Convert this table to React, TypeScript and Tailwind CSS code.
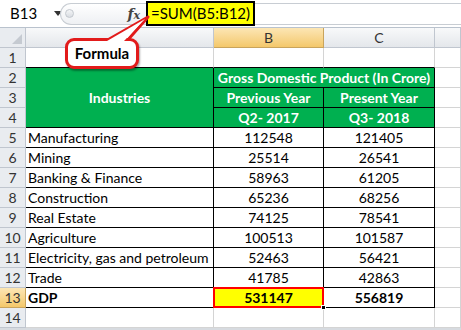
import React from 'react';

const rows: [string, string, string][] = [
  ['Manufacturing', '112548', '121405'],
  ['Mining', '25514', '26541'],
  ['Banking & Finance', '58963', '61205'],
  ['Construction', '65236', '68256'],
  ['Real Estate', '74125', '78541'],
  ['Agriculture', '100513', '101587'],
  ['Electricity, gas and petroleum', '52463', '56421'],
  ['Trade', '41785', '42863'],
];

const rowHead = 'flex items-center justify-center border-r border-b border-[#c0c6cf] bg-[#e9ecf0] text-[#333] text-[14px]';
const colHead = 'flex items-center justify-center border-r border-b border-[#c0c6cf] bg-gradient-to-b from-[#f8f9fa] to-[#e4e7eb] text-[#333] text-[14px]';
const selHead = 'flex items-center justify-center border-r border-b border-[#c9a45c] bg-gradient-to-b from-[#fce6b4] to-[#f4c86a] text-[14px] text-[#333]';
const grid = 'border-r border-b border-[#d4d4d4] bg-white';
const green = 'flex items-center justify-center whitespace-nowrap bg-[#00b050] text-white font-bold text-[14px] border-r border-b border-black';
const cell = 'flex items-center border-r border-b border-black bg-white text-[14px] text-black';

export default function App() {
  return (
    <div className="relative w-[461px] h-[330px] overflow-hidden bg-white font-['Lato',sans-serif] leading-none">
      {/* formula bar */}
      <div className="flex items-center h-[28px] border-b border-[#b9c2cd] bg-white">
        <div className="flex items-center w-[60px] h-full pl-[10px] text-[15px] text-black">
          <span>B13</span>
          <span className="ml-[17px] w-0 h-0 border-l-[4px] border-r-[4px] border-t-[5px] border-l-transparent border-r-transparent border-t-[#333]" />
        </div>
        <div className="flex items-center w-[86px] h-[22px] rounded-l-full border border-r-0 border-[#c8cdd3] bg-gradient-to-b from-white to-[#eef0f3]">
          <span className="ml-[4px] w-[9px] h-[9px] rounded-full border border-[#c3c8ce] bg-gradient-to-b from-[#f4f5f7] to-[#d9dde2]" />
          <span className="ml-auto mr-[6px] font-['DejaVu_Serif',serif] italic font-bold text-[14px] text-[#444]">
            f<span className="text-[11px]">x</span>
          </span>
        </div>
        <div className="flex items-center h-[25px] px-[3px] border-2 border-black bg-[#ffff00] text-[15px] text-black">
          =SUM(B5:B12)
        </div>
        <div className="flex-1 h-[22px] border-t border-b border-[#c8cdd3]" />
      </div>

      {/* sheet grid */}
      <div className="grid grid-cols-[26px_188px_110px_111px_1fr] auto-rows-[20px]">
        {/* column headers */}
        <div className="relative border-r border-b border-[#c0c6cf] bg-[#e9ecf0]">
          <svg className="absolute right-[3px] bottom-[3px]" width="10" height="10">
            <polygon points="10,0 10,10 0,10" fill="#c5cad1" />
          </svg>
        </div>
        <div className={colHead}>A</div>
        <div className={selHead}>B</div>
        <div className={colHead}>C</div>
        <div className={colHead} />

        {/* row 1 */}
        <div className={rowHead}>1</div>
        <div className="border-r border-b border-r-[#d4d4d4] border-b-black bg-white" />
        <div className="border-r border-b border-r-[#d4d4d4] border-b-black bg-white" />
        <div className="border-r border-b border-r-[#d4d4d4] border-b-black bg-white" />
        <div className={grid} />

        {/* rows 2-4 header */}
        <div className={`${rowHead} col-start-1 row-start-3`}>2</div>
        <div className={`${rowHead} col-start-1 row-start-4`}>3</div>
        <div className={`${rowHead} col-start-1 row-start-5`}>4</div>
        <div className={`${green} col-start-2 row-start-3 row-span-3`}>Industries</div>
        <div className={`${green} col-start-3 col-span-2 row-start-3`}>Gross Domestic Product (In Crore)</div>
        <div className={`${green} col-start-3 row-start-4`}>Previous Year</div>
        <div className={`${green} col-start-4 row-start-4`}>Present Year</div>
        <div className={`${green} col-start-3 row-start-5`}>Q2- 2017</div>
        <div className={`${green} col-start-4 row-start-5`}>Q3- 2018</div>
        <div className={`${grid} col-start-5 row-start-3`} />
        <div className={`${grid} col-start-5 row-start-4`} />
        <div className={`${grid} col-start-5 row-start-5`} />

        {/* data rows */}
        {rows.map(([name, b, c], i) => (
          <React.Fragment key={name}>
            <div className={rowHead}>{i + 5}</div>
            <div className={`${cell} pl-[2px] whitespace-nowrap`}>{name}</div>
            <div className={`${cell} justify-center`}>{b}</div>
            <div className={`${cell} justify-center`}>{c}</div>
            <div className={grid} />
          </React.Fragment>
        ))}

        {/* row 13 */}
        <div className={selHead}>13</div>
        <div className={`${cell} bg-[#ffc000] pl-[2px] font-bold`}>GDP</div>
        <div className="relative flex items-center justify-center border-r border-b border-black bg-[#ffff00] text-[14px] font-bold text-black">
          <span className="absolute inset-[-1px] border-2 border-[#ff0000]" />
          <span className="absolute right-[-3px] bottom-[-3px] w-[5px] h-[5px] bg-black border border-white" />
          531147
        </div>
        <div className={`${cell} justify-center font-bold`}>556819</div>
        <div className={grid} />

        {/* row 14 */}
        <div className={rowHead}>14</div>
        <div className={grid} />
        <div className={grid} />
        <div className={grid} />
        <div className={grid} />
      </div>
      <div className="h-[2px] bg-[#d7dbe0]" />

      {/* callout */}
      <svg className="absolute left-0 top-0" width="170" height="75">
        <polygon points="104,42 126,42 148,17" fill="white" stroke="#e21b1b" strokeWidth="3" strokeLinejoin="round" />
      </svg>
      <div className="absolute left-[65px] top-[38px] w-[74px] h-[31px] flex items-center justify-center rounded-[9px] border-[3px] border-[#e21b1b] bg-white shadow-[1px_2px_2px_rgba(0,0,0,0.35)] text-[15px] font-bold text-black">
        Formula
      </div>
      <svg className="absolute left-0 top-0 pointer-events-none" width="170" height="75">
        <polygon points="107,41 124,41 145,19" fill="white" />
      </svg>
    </div>
  );
}
